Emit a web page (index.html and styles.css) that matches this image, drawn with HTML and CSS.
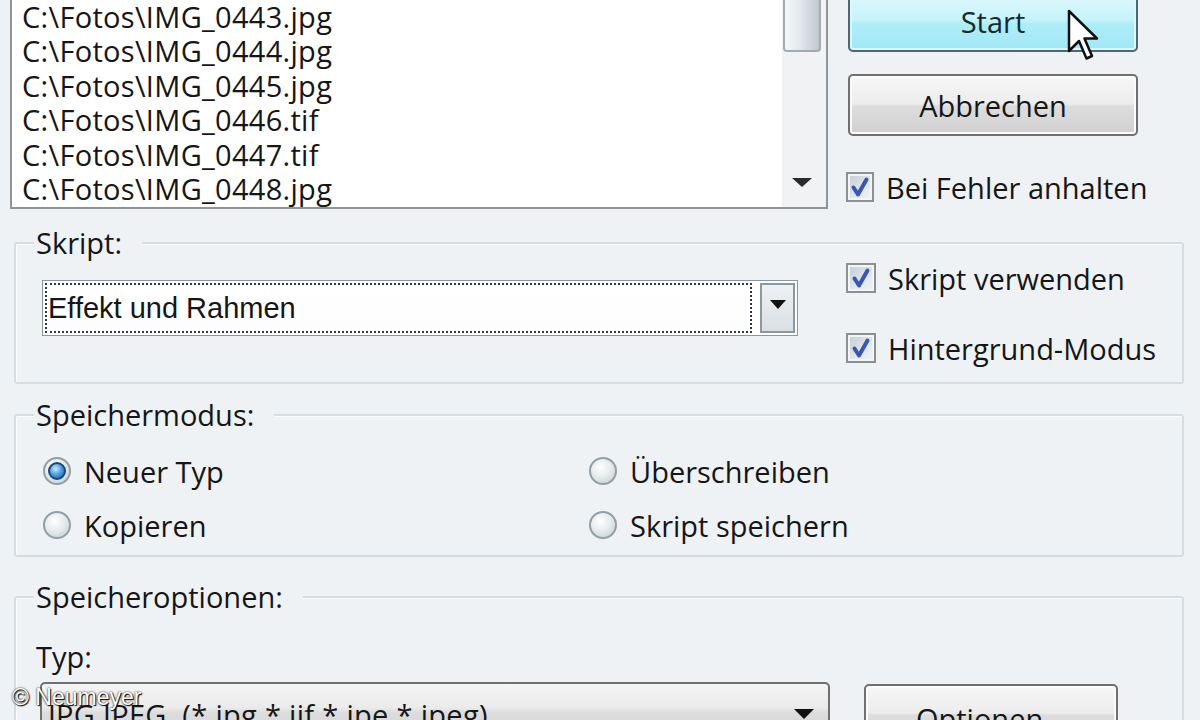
FILE: index.html
```html
<!DOCTYPE html>
<html lang="de">
<head>
  <meta charset="UTF-8">
  <meta name="viewport" content="width=device-width, initial-scale=1.0">
  <title>Stapelverarbeitung</title>
  <link rel="stylesheet" href="styles.css">
</head>
<body>
  <div class="dialog">
    <div class="top-row">
      <div class="file-list">
        <ul class="files">
          <li>C:\Fotos\IMG_0443.jpg</li>
          <li>C:\Fotos\IMG_0444.jpg</li>
          <li>C:\Fotos\IMG_0445.jpg</li>
          <li>C:\Fotos\IMG_0446.tif</li>
          <li>C:\Fotos\IMG_0447.tif</li>
          <li>C:\Fotos\IMG_0448.jpg</li>
        </ul>
        <div class="scrollbar">
          <div class="thumb"></div>
          <div class="track"></div>
          <div class="arrow-btn">
            <svg width="20" height="9" viewBox="0 0 20 9"><polygon points="0,0 20,0 10,9" fill="#2a2a2a"/></svg>
          </div>
        </div>
      </div>

      <div class="actions">
        <button class="btn btn-start" type="button">Start
          <svg class="cursor" width="32" height="52" viewBox="0 0 32 52">
            <path d="M2 2 L2 42 L12 32 L19.5 49.5 L25 47 L17.5 29.5 L30 29.5 Z" fill="#fff" stroke="#111" stroke-width="2.5" stroke-linejoin="round"/>
          </svg>
        </button>
        <button class="btn" type="button">Abbrechen</button>
        <label class="check">
          <span class="box"><svg width="24" height="24" viewBox="0 0 24 24"><path d="M5.5 12.5 L10 19.5 L18.5 4.5" fill="none" stroke="#3a56b0" stroke-width="4" stroke-linecap="round" stroke-linejoin="round"/></svg></span>
          Bei Fehler anhalten
        </label>
      </div>
    </div>

    <fieldset class="group">
      <legend>Skript:</legend>
      <div class="script-row">
        <div class="combo">
          <div class="combo-field">Effekt und Rahmen</div>
          <div class="combo-btn">
            <svg width="16" height="9" viewBox="0 0 16 9"><polygon points="0,0 16,0 8,9" fill="#111"/></svg>
          </div>
        </div>
        <div class="checks">
          <label class="check">
            <span class="box"><svg width="24" height="24" viewBox="0 0 24 24"><path d="M5.5 12.5 L10 19.5 L18.5 4.5" fill="none" stroke="#3a56b0" stroke-width="4" stroke-linecap="round" stroke-linejoin="round"/></svg></span>
            Skript verwenden
          </label>
          <label class="check">
            <span class="box"><svg width="24" height="24" viewBox="0 0 24 24"><path d="M5.5 12.5 L10 19.5 L18.5 4.5" fill="none" stroke="#3a56b0" stroke-width="4" stroke-linecap="round" stroke-linejoin="round"/></svg></span>
            Hintergrund-Modus
          </label>
        </div>
      </div>
    </fieldset>

    <fieldset class="group group-mode">
      <legend>Speichermodus:</legend>
      <div class="radios">
        <label class="radio-row"><span class="radio checked"></span>Neuer Typ</label>
        <label class="radio-row"><span class="radio"></span>Überschreiben</label>
        <label class="radio-row"><span class="radio"></span>Kopieren</label>
        <label class="radio-row"><span class="radio"></span>Skript speichern</label>
      </div>
    </fieldset>

    <fieldset class="group group-options">
      <legend>Speicheroptionen:</legend>
      <div class="options">
        <div class="field-label">Typ:</div>
        <div class="options-row">
          <div class="type-select">
            <span class="type-text">JPG JPEG  (*.jpg,*.jif,*.jpe,*.jpeg)</span>
            <svg width="20" height="10" viewBox="0 0 20 10"><polygon points="0,0 20,0 10,10" fill="#111"/></svg>
          </div>
          <button class="btn btn-options" type="button">Optionen...</button>
        </div>
      </div>
    </fieldset>
  </div>

  <div class="watermark">© Neumeyer</div>
</body>
</html>
```

FILE: styles.css
```css
/* Reset */
html, body, ul, fieldset, legend {
  margin: 0;
  padding: 0;
}

* {
  box-sizing: border-box;
}

html, body {
  overflow: hidden;
  height: 720px;
}

body {
  font-family: 'Open Sans', 'Noto Sans', sans-serif;
  font-size: 29px;
  color: #161616;
  background-color: #eef2f5;
}

.dialog {
  padding: 0 16px 0 14px;
}

/* File list and action buttons */
.top-row {
  display: flex;
  margin: -10px 0 0 -4px;
}

.file-list {
  display: flex;
  width: 818px;
  height: 219px;
  border: 2px solid #8f9498;
  background-color: #fff;
}

.files {
  flex: 1;
  list-style: none;
  padding: 8px 0 0 10px;
  line-height: 34.4px;
  white-space: nowrap;
  letter-spacing: 0.3px;
}

.scrollbar {
  display: flex;
  flex-direction: column;
  width: 44px;
  padding: 0 5px 0 1px;
  background-color: #f0f2f3;
}

.thumb {
  height: 60px;
  border: 2px solid #a2abb1;
  border-top: none;
  border-radius: 0 0 4px 4px;
  background: linear-gradient(to right, #f6f8f9 0%, #e2e8eb 45%, #bfc8ce 100%);
}

.track {
  flex: 1;
}

.arrow-btn {
  height: 50px;
  display: flex;
  align-items: center;
  justify-content: center;
}

.actions {
  display: flex;
  flex-direction: column;
  width: 290px;
  margin-left: 20px;
}

.btn {
  font-family: inherit;
  font-size: 29px;
  color: #161616;
  height: 62px;
  border: 2px solid #707070;
  border-radius: 5px;
  background: linear-gradient(#f7f7f7 0%, #ececec 48%, #dddddd 52%, #d0d0d0 100%);
  box-shadow: inset 0 0 0 2px #fbfbfb;
  padding: 0;
}

.btn-start {
  position: relative;
  color: #142a2e;
  border-color: #51666e;
  background: linear-gradient(#e0f9fd 0%, #c6f3fa 48%, #aeedf8 55%, #a0e8f5 100%);
  box-shadow: inset 0 0 0 2px #d9f7fc;
}

.btn + .btn {
  margin-top: 22px;
}

.cursor {
  position: absolute;
  left: 217px;
  top: 17px;
}

.check {
  display: flex;
  align-items: center;
  gap: 12px;
  height: 36px;
  white-space: nowrap;
}

.actions .check {
  margin: 33px 0 0 -2px;
}

.box {
  display: flex;
  align-items: center;
  justify-content: center;
  width: 30px;
  height: 30px;
  border: 2px solid #8d9092;
  background: linear-gradient(135deg, #c3cdd6 0%, #dfe5ea 55%, #f3f5f7 100%);
  box-shadow: inset 0 0 0 2px #f3f4f5;
}

/* Group boxes */
.group {
  border: 2px solid #d6dde2;
  border-radius: 3px;
  box-shadow: inset 1px 1px 0 #fafbfc;
  min-width: 0;
  margin-top: 17px;
}

.group legend {
  margin-left: 18px;
  padding: 0 20px 0 2px;
  line-height: 34px;
  background-color: #eef2f5;
}

.script-row {
  display: flex;
  padding: 0 0 16px 26px;
}

.combo {
  display: flex;
  width: 756px;
  height: 56px;
  margin-top: 20px;
  padding: 2px;
  border: 1px solid #8997a2;
  background-color: #fff;
}

.combo-field {
  flex: 1;
  border: 2px dotted #2e3742;
  padding-left: 1px;
  font-family: 'Liberation Sans', Arial, sans-serif;
  font-size: 29px;
  line-height: 46px;
  background: linear-gradient(#fff, #fdfdfd);
}

.combo-btn {
  width: 35px;
  margin-left: 8px;
  display: flex;
  justify-content: center;
  padding-top: 15px;
  border: 2px solid #8a98a3;
  background: linear-gradient(#eef1f3 0%, #d9dfe3 100%);
}

.checks {
  display: flex;
  flex-direction: column;
  gap: 34px;
  margin-left: 48px;
}

.group-mode {
  margin-top: 14px;
}

.radios {
  display: grid;
  grid-template-columns: 546px auto;
  row-gap: 18px;
  padding: 21px 0 12px 27px;
}

.radio-row {
  display: flex;
  align-items: center;
  gap: 13px;
  height: 36px;
  white-space: nowrap;
}

.radio {
  display: flex;
  align-items: center;
  justify-content: center;
  width: 28px;
  height: 28px;
  border-radius: 50%;
  border: 2px solid #939fa7;
  background: radial-gradient(circle at 40% 35%, #ffffff 0%, #eaeeee 40%, #c3cccf 100%);
}

.radio.checked::after {
  content: '';
  width: 14px;
  height: 14px;
  border-radius: 50%;
  border: 2px solid #17497c;
  background: radial-gradient(circle at 40% 35%, #c9ebfd 0%, #4b9be0 50%, #1d5c9b 100%);
}

.group-options {
  margin-top: 23px;
}

.options {
  padding: 25px 0 0 20px;
}

.field-label {
  line-height: 36px;
}

.options-row {
  display: flex;
  margin-top: 7px;
}

.type-select {
  display: flex;
  justify-content: space-between;
  width: 790px;
  height: 62px;
  margin-left: 4px;
  padding: 14px 14px 0 6px;
  border: 2px solid #707070;
  border-radius: 5px;
  background: linear-gradient(#f4f4f4 0%, #ebebeb 40%, #dcdcdc 50%, #d3d3d3 100%);
  line-height: 34px;
}

.type-text {
  white-space: pre;
  letter-spacing: 0.3px;
}

.type-select svg {
  margin-top: 11px;
}

.btn-options {
  width: 254px;
  height: 60px;
  margin: 2px 0 0 34px;
  padding-top: 8px;
}

/* Photo credit */
.watermark {
  position: absolute;
  left: 12px;
  top: 684px;
  font-family: 'Liberation Sans', Arial, sans-serif;
  font-size: 23px;
  color: #fff;
  text-shadow: 0 0 2px #000, 1px 1px 1px #000;
}
```
